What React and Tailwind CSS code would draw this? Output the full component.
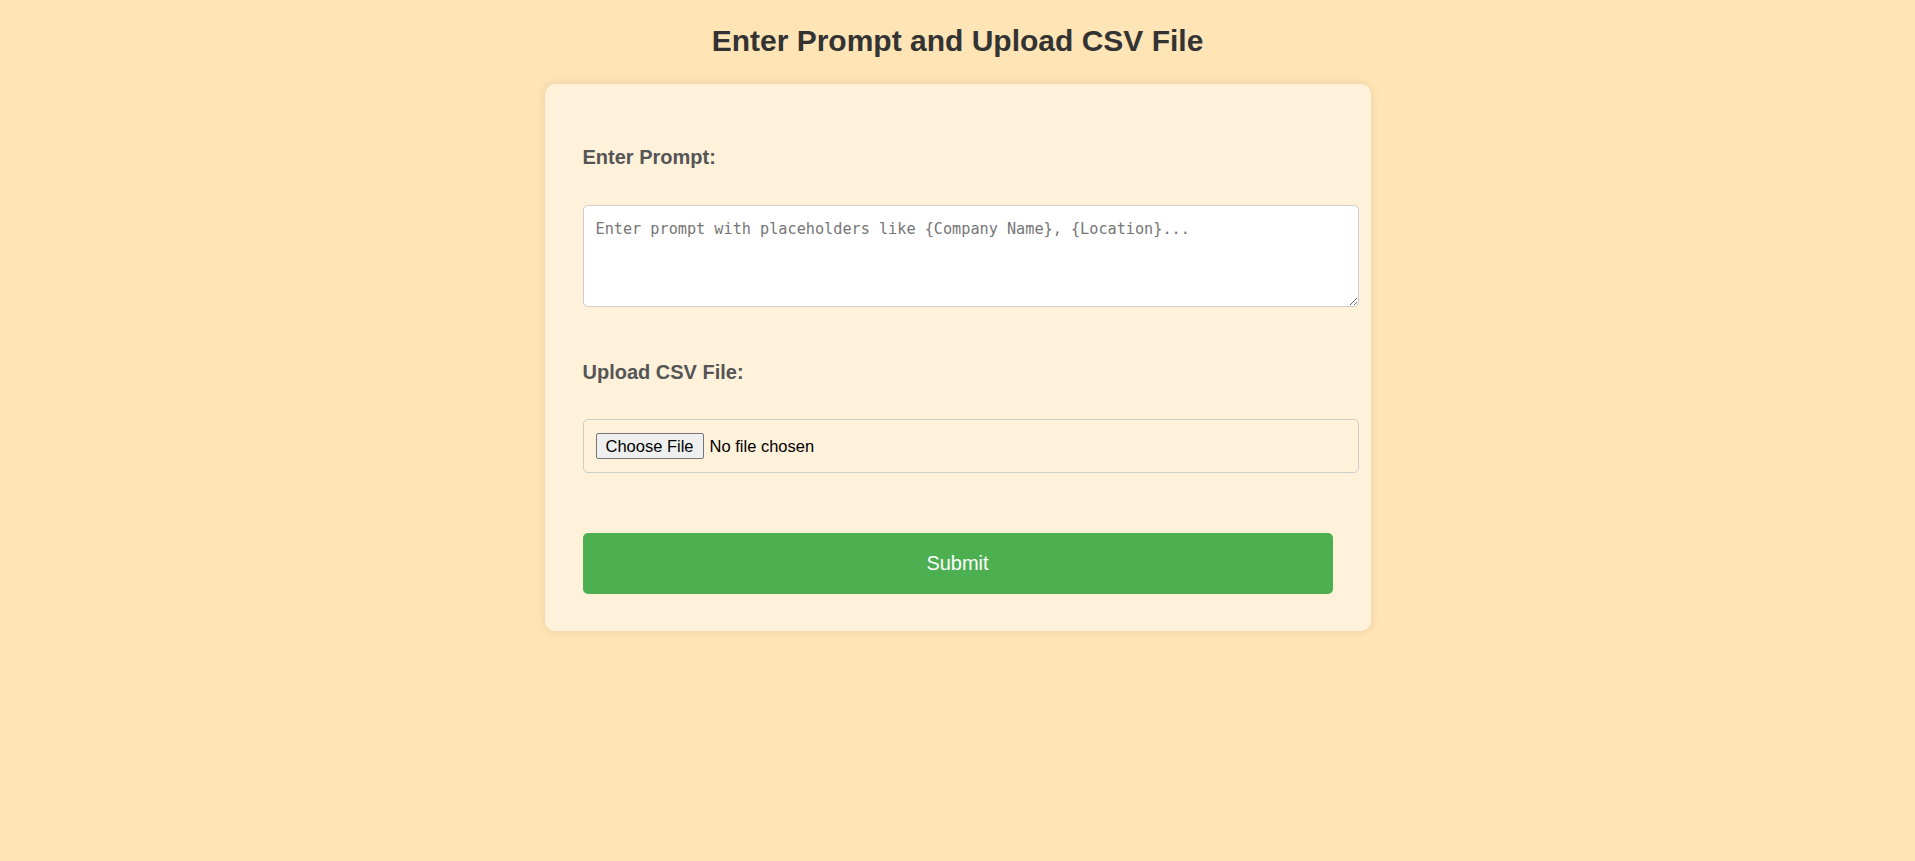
import React from 'react';

const App = () => {
  return (
    <div className="min-h-screen bg-[#FFE4B5] font-['Liberation_Sans',Arial,sans-serif] pt-[24px] pb-10">
      <h1 className="text-center text-[30px] font-bold text-[#333333] leading-[34.5px] mb-[25px]">
        Enter Prompt and Upload CSV File
      </h1>

      <div className="w-[826px] mx-auto bg-[#FFF1DA] rounded-[10px] shadow-[0_0_10px_rgba(0,0,0,0.1)] px-[38px] pt-[62px] pb-[37px]">
        <form onSubmit={(e) => e.preventDefault()}>
          <label htmlFor="prompt" className="block text-[20px] font-bold text-[#555555] leading-[23px] mb-[36px]">
            Enter Prompt:
          </label>
          <textarea
            id="prompt"
            placeholder="Enter prompt with placeholders like {Company Name}, {Location}..."
            className="block w-[776px] h-[102px] p-[12px] bg-white border border-[#cccccc] rounded-[5px] font-['DejaVu_Sans_Mono',monospace] text-[15.2px] text-[#333] placeholder:text-[#757575] resize"
          />

          <label htmlFor="csv" className="block text-[20px] font-bold text-[#555555] leading-[23px] mt-[54px] mb-[35px]">
            Upload CSV File:
          </label>
          <input
            id="csv"
            type="file"
            accept=".csv"
            className="block w-[776px] px-[12px] py-[12px] border border-[#cccccc] rounded-[5px] text-[16.5px] leading-[28px] text-black file:h-[26px] file:px-[9px] file:mr-[6px] file:bg-[#efefef] file:border file:border-[#767676] file:rounded-[2px] file:text-black file:leading-[22px]"
          />

          <button
            type="submit"
            className="block w-full h-[61px] mt-[60px] bg-[#4CAF50] text-white text-[20px] rounded-[5px]"
          >
            Submit
          </button>
        </form>
      </div>
    </div>
  );
};

export default App;
